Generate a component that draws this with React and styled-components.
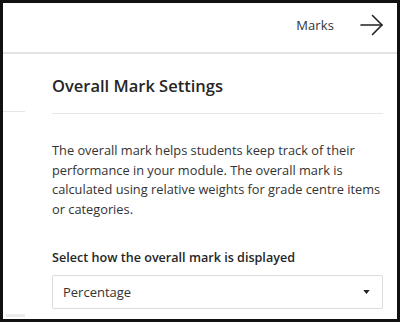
import React from "react";
import styled, { createGlobalStyle } from "styled-components";

const GlobalStyle = createGlobalStyle`
  html, body {
    margin: 0;
    padding: 0;
    background: #ffffff;
  }
  body {
    font-family: "Open Sans", "Noto Sans", "Liberation Sans", sans-serif;
    color: #262626;
  }
`;

const Frame = styled.div`
  width: 400px;
  height: 322px;
  box-sizing: border-box;
  border: 3px solid #111;
  background: #fff;
  display: flex;
  flex-direction: column;
  overflow: hidden;
`;

const Header = styled.header`
  height: 51px;
  flex-shrink: 0;
  display: flex;
  align-items: center;
  justify-content: flex-end;
  gap: 26px;
  padding: 0 13px 5px 0;
  box-sizing: border-box;
  border-bottom: 2px solid #e3e3e3;
`;

const HeaderLink = styled.span`
  font-size: 13px;
  color: #333;
  letter-spacing: 0.1px;
`;

const Body = styled.div`
  flex: 1;
  display: flex;
  min-height: 0;
`;

const SideStrip = styled.div`
  width: 22px;
  flex-shrink: 0;
  display: flex;
  flex-direction: column;
  justify-content: space-between;
`;

const SideHead = styled.div`
  height: 57px;
  border-bottom: 1px solid #e6e6e6;
`;

const SideFoot = styled.div`
  height: 3px;
  margin: 0 0 2px 3px;
  background: #ececec;
`;

const Panel = styled.section`
  flex: 1;
  padding: 0 14px 0 27px;
  display: flex;
  flex-direction: column;
`;

const Title = styled.h2`
  margin: 0;
  padding: 20px 0 16px;
  font-size: 16.5px;
  font-weight: 600;
  color: #262626;
  border-bottom: 1px solid #e6e6e6;
`;

const Description = styled.p`
  margin: 27px 0 0;
  font-size: 12.8px;
  line-height: 19.5px;
  color: #333;
`;

const FieldLabel = styled.label`
  display: block;
  margin-top: 30px;
  font-size: 12.6px;
  font-weight: 600;
  color: #262626;
`;

const SelectBox = styled.div`
  margin-top: 9px;
  height: 34px;
  box-sizing: border-box;
  border: 1px solid #dcdcdc;
  border-radius: 2px;
  display: flex;
  align-items: center;
  justify-content: space-between;
  padding: 0 12px 0 10px;
  font-size: 13px;
  color: #333;
`;

const Caret = () => (
  <svg width="7" height="4" viewBox="0 0 8 5">
    <path d="M0 0 L8 0 L4 5 Z" fill="#222" />
  </svg>
);

const ArrowIcon = () => (
  <svg width="24" height="22" viewBox="0 0 24 22" fill="none" stroke="#222" strokeWidth="1.6" strokeLinecap="round" strokeLinejoin="round">
    <path d="M1 11 H22" />
    <path d="M12.5 1.5 L22 11 L12.5 20.5" />
  </svg>
);

export default function App() {
  return (
    <>
      <GlobalStyle />
      <Frame>
        <Header>
          <HeaderLink>Marks</HeaderLink>
          <ArrowIcon />
        </Header>
        <Body>
          <SideStrip>
            <SideHead />
            <SideFoot />
          </SideStrip>
          <Panel>
            <Title>Overall Mark Settings</Title>
            <Description>
              The overall mark helps students keep track of their performance in
              your module. The overall mark is calculated using relative weights
              for grade centre items or categories.
            </Description>
            <FieldLabel>Select how the overall mark is displayed</FieldLabel>
            <SelectBox>
              <span>Percentage</span>
              <Caret />
            </SelectBox>
          </Panel>
        </Body>
      </Frame>
    </>
  );
}
